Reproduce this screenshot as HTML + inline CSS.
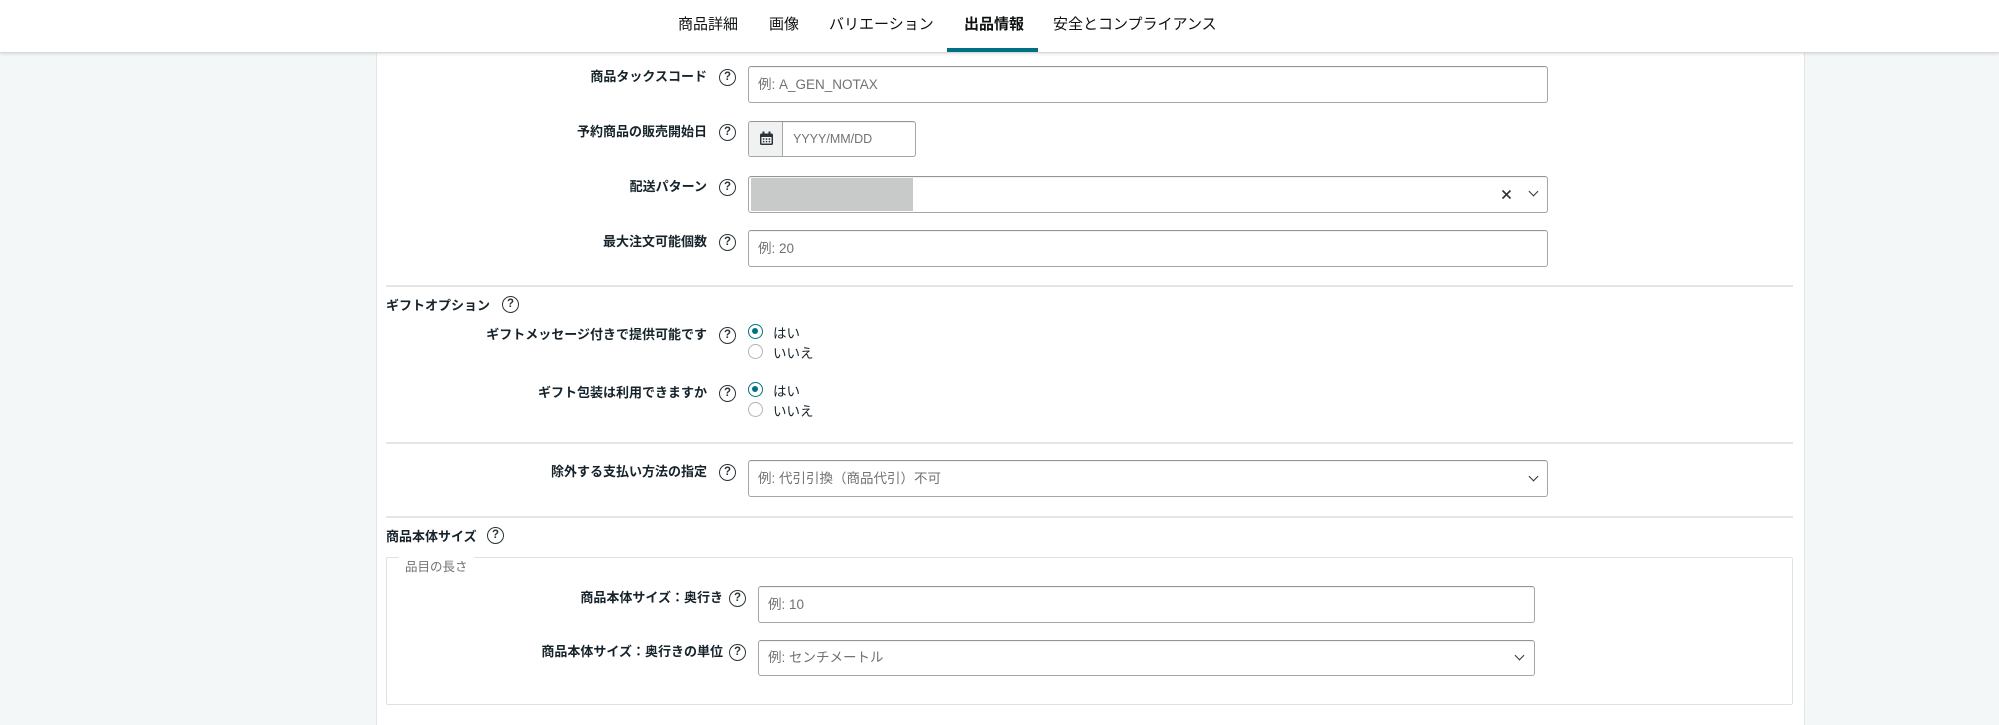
<!DOCTYPE html>
<html><head><meta charset="utf-8"><style>
*{box-sizing:border-box;margin:0;padding:0}
body{width:1999px;height:725px;background:#f4f7f8;font-family:"Liberation Sans","Noto Sans CJK JP",sans-serif;position:relative;overflow:hidden;color:#0f1111}
.hdr{position:absolute;left:0;top:0;width:1999px;height:53px;background:#fff;border-bottom:1px solid #d5d9d9;box-shadow:0 1px 3px rgba(0,0,0,.12);z-index:2}
.tab{position:absolute;top:13px;font-size:15px;color:#0f1111;white-space:nowrap}
.ul{position:absolute;left:947px;top:48px;width:91px;height:4px;background:#007185}
.panel{position:absolute;left:376px;top:0;width:1429px;height:725px;background:#fff;border-left:1px solid #e3e6e6;border-right:1px solid #e3e6e6}
.lbl{position:absolute;font-size:13px;font-weight:bold;white-space:nowrap;text-align:right;color:#16232a}
.q{position:absolute;width:17px;height:17px;border:1.5px solid #2b3438;border-radius:50%;font-size:11.5px;font-weight:bold;line-height:14px;text-align:center;color:#2b3438;margin-top:2px}
.inp{position:absolute;background:#fff;border:1px solid #a6a6a6;border-top-color:#949494;border-radius:3px;box-shadow:0 1px 0 rgba(0,0,0,.05) inset;font-size:13.5px;color:#6f7373;padding-left:9px;white-space:nowrap}
.hr{position:absolute;left:386px;width:1407px;height:2px;background:#e3e6e6}
.r{position:absolute;width:15px;height:15px;border-radius:50%;border:1px solid #b0b4b4;background:#fff}
.r.on{border:1.5px solid #007185}
.r.on::after{content:"";position:absolute;left:3px;top:3px;width:6px;height:6px;border-radius:50%;background:#007185}
.rt{position:absolute;font-size:13.5px;color:#16232a}
.chev{position:absolute;width:7px;height:7px;border-right:1.8px solid #2b3438;border-bottom:1.8px solid #2b3438;transform:rotate(45deg)}
</style></head><body>
<div class="panel"></div>
<div class="hdr">
<span class="tab" style="left:678px">商品詳細</span>
<span class="tab" style="left:769px">画像</span>
<span class="tab" style="left:829px">バリエーション</span>
<span class="tab" style="left:964px;font-weight:bold">出品情報</span>
<span class="tab" style="left:1053px">安全とコンプライアンス</span>
<div class="ul"></div>
</div>

<div class="lbl" style="right:1292px;top:66px">商品タックスコード</div><div class="q" style="left:719px;top:67px">?</div>
<div class="inp" style="left:748px;top:66px;width:800px;height:37px;line-height:35px">例: A_GEN_NOTAX</div>

<div class="lbl" style="right:1292px;top:121px">予約商品の販売開始日</div><div class="q" style="left:719px;top:122px">?</div>
<div class="inp" style="left:748px;top:121px;width:168px;height:36px;line-height:34px;padding-left:44px;font-size:12.5px">YYYY/MM/DD</div>
<div style="position:absolute;left:749px;top:122px;width:34px;height:34px;background:#f0f2f2;border-right:1px solid #a6a6a6;border-radius:3px 0 0 3px"></div>
<svg style="position:absolute;left:759px;top:131px" width="15" height="15" viewBox="0 0 15 15"><rect x="1" y="2.5" width="13" height="11.5" rx="1.5" fill="#2b3438"/><rect x="3.5" y="0.5" width="2" height="3" fill="#2b3438"/><rect x="9.5" y="0.5" width="2" height="3" fill="#2b3438"/><rect x="2.5" y="6" width="10" height="6.5" fill="#fff"/><g fill="#2b3438"><rect x="3.8" y="7.2" width="1.6" height="1.6"/><rect x="6.7" y="7.2" width="1.6" height="1.6"/><rect x="9.6" y="7.2" width="1.6" height="1.6"/><rect x="3.8" y="9.8" width="1.6" height="1.6"/><rect x="6.7" y="9.8" width="1.6" height="1.6"/><rect x="9.6" y="9.8" width="1.6" height="1.6"/></g></svg>

<div class="lbl" style="right:1292px;top:176px">配送パターン</div><div class="q" style="left:719px;top:177px">?</div>
<div class="inp" style="left:748px;top:176px;width:800px;height:37px"></div>
<div style="position:absolute;left:751px;top:178px;width:162px;height:33px;background:#c8c9c9"></div>
<svg style="position:absolute;left:1501px;top:189px" width="11" height="11" viewBox="0 0 11 11"><path d="M1.5 1.5L9.5 9.5M9.5 1.5L1.5 9.5" stroke="#2b3438" stroke-width="1.6"/></svg>
<div class="chev" style="left:1530px;top:188px"></div>

<div class="lbl" style="right:1292px;top:231px">最大注文可能個数</div><div class="q" style="left:719px;top:232px">?</div>
<div class="inp" style="left:748px;top:230px;width:800px;height:37px;line-height:35px">例: 20</div>

<div class="hr" style="top:285px"></div>
<div class="lbl" style="left:386px;top:295px;text-align:left">ギフトオプション</div><div class="q" style="left:502px;top:294px">?</div>

<div class="lbl" style="right:1292px;top:324px">ギフトメッセージ付きで提供可能です</div><div class="q" style="left:719px;top:325px">?</div>
<div class="r on" style="left:748px;top:324px"></div><div class="rt" style="left:773px;top:322px">はい</div>
<div class="r" style="left:748px;top:344px"></div><div class="rt" style="left:773px;top:342px">いいえ</div>

<div class="lbl" style="right:1292px;top:382px">ギフト包装は利用できますか</div><div class="q" style="left:719px;top:383px">?</div>
<div class="r on" style="left:748px;top:382px"></div><div class="rt" style="left:773px;top:380px">はい</div>
<div class="r" style="left:748px;top:402px"></div><div class="rt" style="left:773px;top:400px">いいえ</div>

<div class="hr" style="top:442px"></div>
<div class="lbl" style="right:1292px;top:461px">除外する支払い方法の指定</div><div class="q" style="left:719px;top:462px">?</div>
<div class="inp" style="left:748px;top:460px;width:800px;height:37px;line-height:35px">例: 代引引換（商品代引）不可</div>
<div class="chev" style="left:1530px;top:473px"></div>

<div class="hr" style="top:516px"></div>
<div class="lbl" style="left:386px;top:526px;text-align:left">商品本体サイズ</div><div class="q" style="left:487px;top:525px">?</div>

<div style="position:absolute;left:386px;top:557px;width:1407px;height:148px;border:1px solid #dfe2e2;border-radius:2px"></div>
<div style="position:absolute;left:399px;top:556px;background:#fff;padding:0 6px;font-size:12.5px;color:#6f7373">品目の長さ</div>

<div class="lbl" style="right:1276px;top:587px">商品本体サイズ：奥行き</div><div class="q" style="left:729px;top:588px">?</div>
<div class="inp" style="left:758px;top:586px;width:777px;height:37px;line-height:35px">例: 10</div>

<div class="lbl" style="right:1276px;top:641px">商品本体サイズ：奥行きの単位</div><div class="q" style="left:729px;top:642px">?</div>
<div class="inp" style="left:758px;top:640px;width:777px;height:36px;line-height:34px">例: センチメートル</div>
<div class="chev" style="left:1516px;top:652px"></div>
</body></html>
